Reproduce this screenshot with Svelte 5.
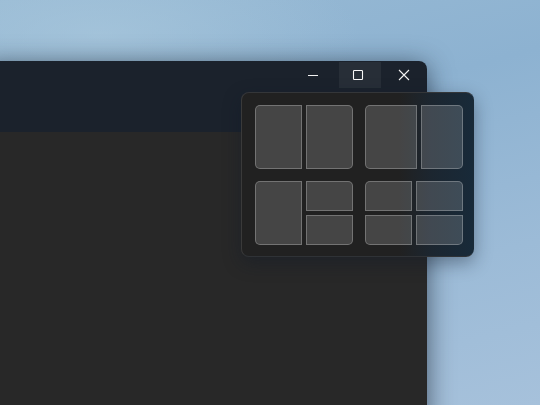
<script>
  // each layout is a grid template plus its panes, corner = which corners are rounded
  const layouts = [
    { cls: 'half', panes: ['left', 'right'] },
    { cls: 'wide', panes: ['left', 'right'] },
    { cls: 'side', panes: ['tall', 'tr', 'br'] },
    { cls: 'quad', panes: ['tl', 'tr', 'bl', 'br'] }
  ]
</script>

<main class="desktop">
  <div class="window">
    <header class="titlebar">
      <div class="controls">
        <button class="control min" aria-label="Minimize">
          <svg width="12" height="12" viewBox="0 0 12 12"><path d="M1 6.5h10" stroke="#f2f2f2" stroke-width="1" /></svg>
        </button>
        <button class="control max" aria-label="Maximize">
          <svg width="12" height="12" viewBox="0 0 12 12"><rect x="1.5" y="1.5" width="9" height="9" rx="0.8" fill="none" stroke="#f8f8f8" stroke-width="1.1" /></svg>
        </button>
        <button class="control" aria-label="Close">
          <svg width="12" height="12" viewBox="0 0 12 12"><path d="M1 1l10 10M11 1L1 11" stroke="#f2f2f2" stroke-width="1.1" /></svg>
        </button>
      </div>
    </header>
    <div class="content"></div>
  </div>

  <div class="flyout">
    {#each layouts as layout}
      <div class="layout {layout.cls}">
        {#each layout.panes as pane}
          <div class="pane {pane}"></div>
        {/each}
      </div>
    {/each}
  </div>
</main>

<style>
:global(body) {
  margin: 0;
}

.desktop {
  position: relative;
  width: 540px;
  height: 405px;
  overflow: hidden;
  background:
    radial-gradient(ellipse 260px 90px at 100px 35px, rgba(172, 202, 222, 0.6), rgba(172, 202, 222, 0) 100%),
    linear-gradient(165deg, #98bad4 0%, #8db2d1 35%, #9cbbd7 70%, #a6c1db 100%);
}

.window {
  position: absolute;
  left: -20px;
  top: 61px;
  width: 447px;
  height: 364px;
  display: flex;
  flex-direction: column;
  border-radius: 8px 8px 0 0;
  overflow: hidden;
  box-shadow: 0 4px 26px rgba(20, 30, 45, 0.65);
}

.titlebar {
  height: 71px;
  background: #1b222c;
  display: flex;
  justify-content: flex-end;
  align-items: flex-start;
}

.controls {
  display: flex;
  padding-top: 1px;
}

.control {
  width: 46px;
  height: 26px;
  padding: 0;
  border: 0;
  background: transparent;
  display: flex;
  align-items: center;
  justify-content: center;
}

.control.min {
  margin-right: 3px;
}

.control.max {
  width: 42px;
  padding-right: 4px;
  background: #272e37;
}

.content {
  flex: 1;
  background: #282828;
}

.flyout {
  position: absolute;
  left: 241px;
  top: 92px;
  width: 233px;
  height: 165px;
  box-sizing: border-box;
  padding: 12px 10px 11px 13px;
  display: grid;
  grid-template-columns: 98px 98px;
  grid-template-rows: 64px 64px;
  column-gap: 12px;
  row-gap: 12px;
  border: 1px solid #3a3a3a;
  border-top-color: #343639;
  border-right-color: #1b2a37;
  border-bottom-color: #2f3236;
  border-radius: 8px;
  background: linear-gradient(90deg, #212121 0%, #212121 68%, #1c2630 82%, #182a39 100%);
  box-shadow: 0 6px 18px rgba(15, 25, 40, 0.4);
}

.layout {
  display: grid;
  gap: 4px;
}

.half {
  grid-template-columns: 47px 47px;
}

.wide {
  grid-template-columns: 52px 42px;
}

.side {
  grid-template-columns: 47px 47px;
  grid-template-rows: 30px 30px;
}

.quad {
  grid-template-columns: 47px 47px;
  grid-template-rows: 30px 30px;
}

.pane {
  box-sizing: border-box;
  border: 1px solid rgba(255, 255, 255, 0.25);
  background: rgba(255, 255, 255, 0.165);
}

.left {
  border-radius: 5px 0 0 5px;
}

.right {
  border-radius: 0 5px 5px 0;
}

.tall {
  grid-row: 1 / 3;
  border-radius: 5px 0 0 5px;
}

.tl {
  border-radius: 5px 0 0 0;
}

.tr {
  border-radius: 0 5px 0 0;
}

.bl {
  border-radius: 0 0 0 5px;
}

.br {
  border-radius: 0 0 5px 0;
}
</style>
